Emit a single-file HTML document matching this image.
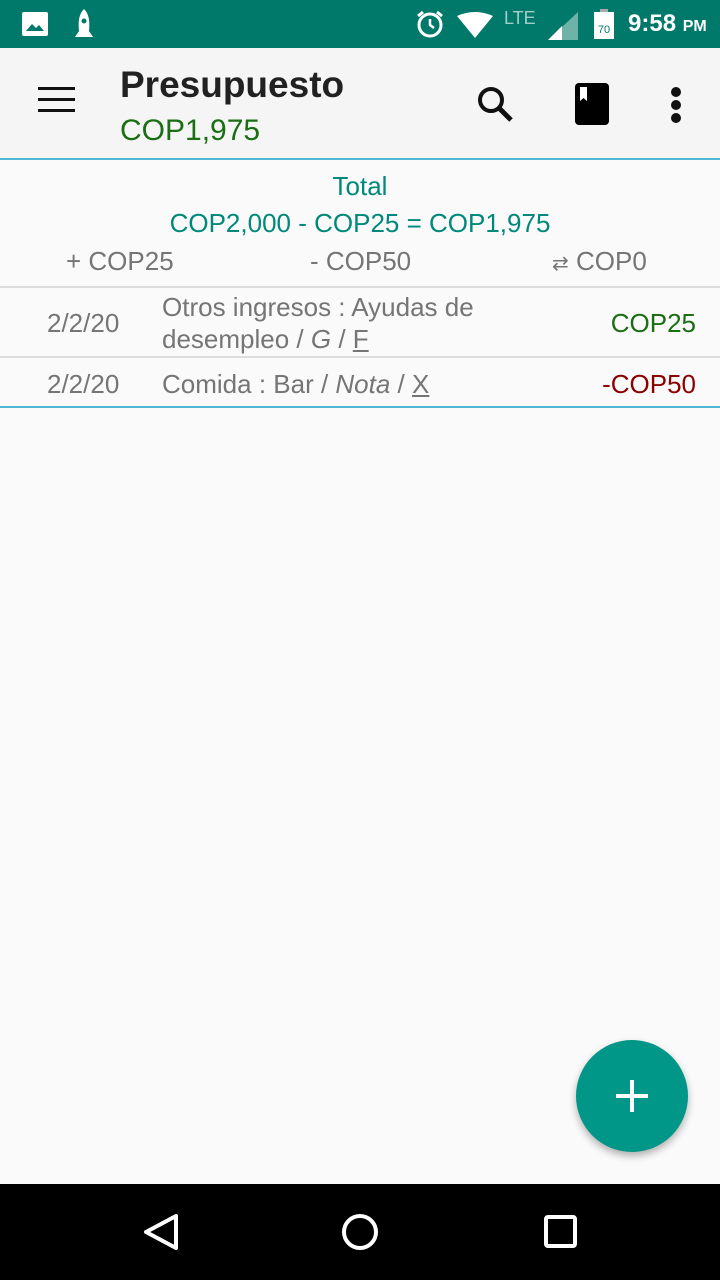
<!DOCTYPE html>
<html><head><meta charset="utf-8"><style>
*{margin:0;padding:0;box-sizing:border-box}
body{width:720px;height:1280px;background:#fafafa;font-family:"Liberation Sans",sans-serif;position:relative;overflow:hidden}
.abs{position:absolute;white-space:nowrap}
.sb{position:absolute;top:0;left:0;width:720px;height:48px;background:#00796b}
.ab{position:absolute;top:48px;left:0;width:720px;height:112px;background:#f5f5f5;border-bottom:2px solid #4fb8d8}
.g{color:#757575;font-size:26px}
</style></head><body>
<div class="sb">
<svg class="abs" style="left:22px;top:12px" width="26" height="24" viewBox="0 0 26 24"><rect x="0" y="0" width="26" height="24" rx="2" fill="#fff"/><path d="M4 19 L10 12 L14 16 L17 13 L22 19Z" fill="#00796b"/></svg>
<svg class="abs" style="left:74px;top:9px" width="20" height="30" viewBox="0 0 20 30"><path d="M10 0 C15 5 16 12 15 22 H5 C4 12 5 5 10 0Z M5 22 L1 28 H19 L15 22Z" fill="#fff"/><circle cx="10" cy="12" r="2.5" fill="#00796b"/></svg>
<svg class="abs" style="left:415px;top:9px" width="30" height="30" viewBox="0 0 30 30"><circle cx="15" cy="16" r="11" fill="none" stroke="#fff" stroke-width="3"/><path d="M15 10 V16 L19 19" stroke="#fff" stroke-width="2.5" fill="none"/><path d="M3 7 L8 3 M27 7 L22 3" stroke="#fff" stroke-width="3"/></svg>
<svg class="abs" style="left:457px;top:12px" width="36" height="26" viewBox="0 0 36 26"><path d="M0 4 Q18 -4 36 4 L18 26Z" fill="#fff"/></svg>
<div class="abs" style="left:504px;top:8px;color:#9fd0c8;font-size:18px">LTE</div>
<svg class="abs" style="left:548px;top:12px" width="30" height="28" viewBox="0 0 30 28"><path d="M30 0 V28 H0Z" fill="#6fb3a8"/><path d="M14 14 V28 H0Z" fill="#fff"/></svg>
<svg class="abs" style="left:594px;top:9px" width="20" height="30" viewBox="0 0 20 30"><rect x="6" y="0" width="8" height="3" fill="#aaa"/><rect x="0" y="3" width="20" height="27" fill="#fff"/><text x="10" y="24" font-size="11" text-anchor="middle" fill="#00796b" font-family="Liberation Sans">70</text></svg>
<div class="abs" style="left:628px;top:10px;color:#fff;font-size:24px;font-weight:bold">9:58 <span style="font-size:16px">PM</span></div>
</div>
<div class="ab">
<div class="abs" style="left:38px;top:39px;width:37px;height:3px;background:#111;box-shadow:0 11px 0 #111,0 22px 0 #111"></div>
<div class="abs" style="left:120px;top:16px;font-size:37px;font-weight:bold;color:#212121">Presupuesto</div>
<div class="abs" style="left:120px;top:66px;font-size:30px;color:#1b6e14">COP1,975</div>
<svg class="abs" style="left:476px;top:37px" width="38" height="38" viewBox="0 0 38 38"><circle cx="15" cy="15" r="11" fill="none" stroke="#111" stroke-width="4"/><path d="M23 23 L35 35" stroke="#111" stroke-width="5"/></svg>
<svg class="abs" style="left:575px;top:35px" width="34" height="42" viewBox="0 0 34 42"><rect width="34" height="42" rx="4" fill="#000"/><path d="M5 4 H12 V18 L8.5 15 L5 18Z" fill="#fff"/></svg>
<div class="abs" style="left:671px;top:39px;width:10px;height:10px;border-radius:5px;background:#111;box-shadow:0 13px 0 #111,0 26px 0 #111"></div>
</div>
<div class="abs" style="left:0;width:720px;top:171px;text-align:center;font-size:26px;color:#00897b">Total</div>
<div class="abs" style="left:0;width:720px;top:208px;text-align:center;font-size:26px;color:#00897b">COP2,000 - COP25 = COP1,975</div>
<div class="abs g" style="left:66px;top:246px">+ COP25</div>
<div class="abs g" style="left:310px;top:246px">- COP50</div>
<div class="abs g" style="left:552px;top:246px"><span style="font-size:20px">⇄</span> COP0</div>
<div class="abs" style="left:0;top:286px;width:720px;height:2px;background:#ddd"></div>
<div class="abs g" style="left:47px;top:308px">2/2/20</div>
<div class="abs g" style="left:162px;top:291px;line-height:32px">Otros ingresos : Ayudas de<br>desempleo / <i>G</i> / <u>F</u></div>
<div class="abs" style="right:24px;top:308px;font-size:26px;color:#1b6e14">COP25</div>
<div class="abs" style="left:0;top:356px;width:720px;height:2px;background:#ddd"></div>
<div class="abs g" style="left:47px;top:369px">2/2/20</div>
<div class="abs g" style="left:162px;top:369px">Comida : Bar / <i>Nota</i> / <u>X</u></div>
<div class="abs" style="right:24px;top:369px;font-size:26px;color:#8b0000">-COP50</div>
<div class="abs" style="left:0;top:406px;width:720px;height:2px;background:#4fb8d8"></div>
<div class="abs" style="left:576px;top:1040px;width:112px;height:112px;border-radius:56px;background:#009688;box-shadow:0 4px 8px rgba(0,0,0,.3)"></div>
<div class="abs" style="left:616px;top:1094px;width:32px;height:4px;background:#fff"></div>
<div class="abs" style="left:630px;top:1080px;width:4px;height:32px;background:#fff"></div>
<div class="abs" style="left:0;top:1184px;width:720px;height:96px;background:#000"></div>
<svg class="abs" style="left:140px;top:1210px" width="440" height="44" viewBox="0 0 440 44"><path d="M36 6 L6 22 L36 38Z" fill="none" stroke="#fff" stroke-width="4" stroke-linejoin="round"/><circle cx="220" cy="22" r="16" fill="none" stroke="#fff" stroke-width="4"/><rect x="406" y="7" width="29" height="29" rx="2" fill="none" stroke="#fff" stroke-width="4"/></svg>
</body></html>
